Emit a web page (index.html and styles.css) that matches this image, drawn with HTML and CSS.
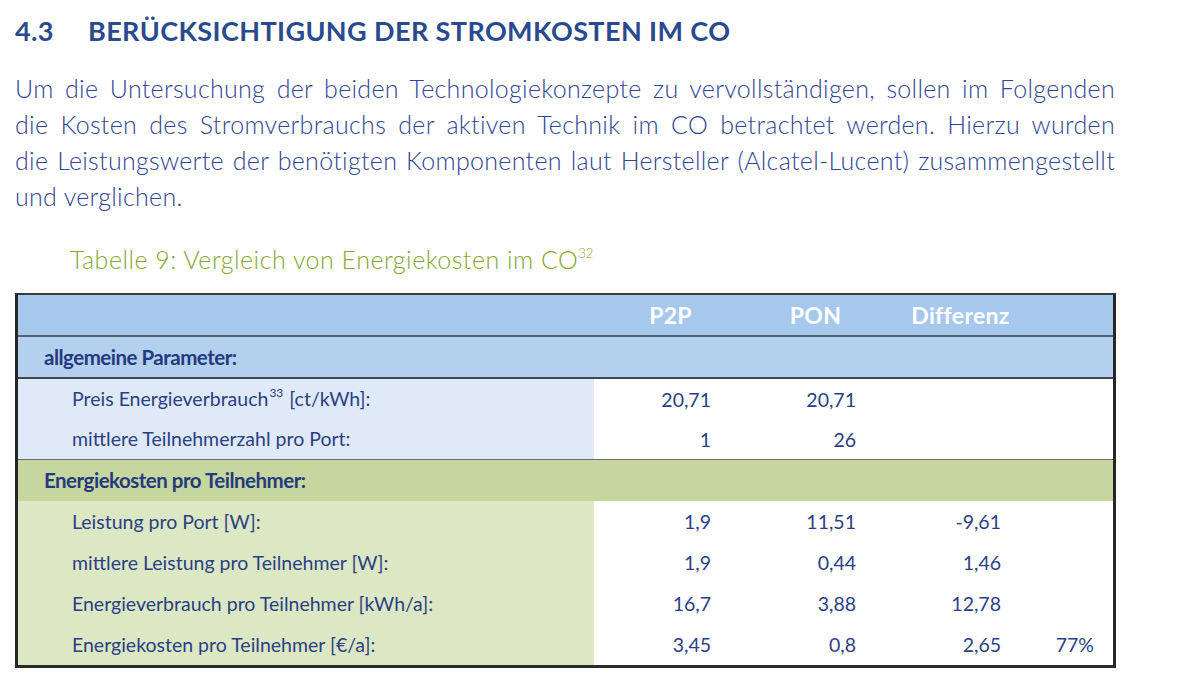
FILE: index.html
```html
<!DOCTYPE html>
<html lang="de">
<head>
<meta charset="utf-8">
<title>Berücksichtigung der Stromkosten im CO</title>
<link rel="stylesheet" href="styles.css">
</head>
<body>
<main class="page">
  <h1 class="heading"><span class="num">4.3</span><span class="title">BERÜCKSICHTIGUNG DER STROMKOSTEN IM CO</span></h1>
  <p class="lead"><span class="ln">Um die Untersuchung der beiden Technologiekonzepte zu vervollständigen, sollen im Folgenden</span> <span class="ln">die Kosten des Stromverbrauchs der aktiven Technik im CO betrachtet werden. Hierzu wurden</span> <span class="ln">die Leistungswerte der benötigten Komponenten laut Hersteller (Alcatel-Lucent) zusammengestellt</span> <span class="ln last">und verglichen.</span></p>
  <div class="caption">Tabelle 9: Vergleich von Energiekosten im CO<sup>32</sup></div>
  <div class="table">
    <div class="row head">
      <div class="c1"></div>
      <div class="c2 th">P2P</div>
      <div class="c3 th">PON</div>
      <div class="c4 th">Differenz</div>
      <div class="c5"></div>
    </div>
    <div class="row section blue">
      <div class="sec">allgemeine Parameter:</div>
    </div>
    <div class="row data blue">
      <div class="c1 label">Preis Energieverbrauch<sup>33</sup> [ct/kWh]:</div>
      <div class="c2 val">20,71</div>
      <div class="c3 val">20,71</div>
      <div class="c4 val"></div>
      <div class="c5 val"></div>
    </div>
    <div class="row data blue">
      <div class="c1 label">mittlere Teilnehmerzahl pro Port:</div>
      <div class="c2 val">1</div>
      <div class="c3 val">26</div>
      <div class="c4 val"></div>
      <div class="c5 val"></div>
    </div>
    <div class="row section green">
      <div class="sec">Energiekosten pro Teilnehmer:</div>
    </div>
    <div class="row data green">
      <div class="c1 label">Leistung pro Port [W]:</div>
      <div class="c2 val">1,9</div>
      <div class="c3 val">11,51</div>
      <div class="c4 val">-9,61</div>
      <div class="c5 val"></div>
    </div>
    <div class="row data green">
      <div class="c1 label">mittlere Leistung pro Teilnehmer [W]:</div>
      <div class="c2 val">1,9</div>
      <div class="c3 val">0,44</div>
      <div class="c4 val">1,46</div>
      <div class="c5 val"></div>
    </div>
    <div class="row data green">
      <div class="c1 label">Energieverbrauch pro Teilnehmer [kWh/a]:</div>
      <div class="c2 val">16,7</div>
      <div class="c3 val">3,88</div>
      <div class="c4 val">12,78</div>
      <div class="c5 val"></div>
    </div>
    <div class="row data green">
      <div class="c1 label">Energiekosten pro Teilnehmer [€/a]:</div>
      <div class="c2 val">3,45</div>
      <div class="c3 val">0,8</div>
      <div class="c4 val">2,65</div>
      <div class="c5 val">77%</div>
    </div>
  </div>
</main>
</body>
</html>
```
FILE: styles.css
```css
html, body {
  margin: 0;
  padding: 0;
  background: #ffffff;
}

.page {
  padding: 14px 0 0 15px;
  width: 1102px;
  font-family: "Lato", "DejaVu Sans", sans-serif;
  color: #34468c;
}

.heading {
  margin: 0;
  font-size: 27px;
  line-height: 34px;
  font-weight: 700;
  color: #2a4a8e;
  letter-spacing: 0.4px;
  display: flex;
}

.heading .num {
  width: 73px;
}

.lead {
  margin: 22px 0 0 0;
  width: 1100px;
  font-size: 25px;
  line-height: 36px;
  font-weight: 300;
  letter-spacing: 0.3px;
  color: #304594;
}

.lead .ln {
  display: block;
  white-space: nowrap;
  text-align: justify;
  text-align-last: justify;
}

.lead .ln.last {
  text-align: left;
  text-align-last: left;
}

.caption {
  margin: 30px 0 0 55px;
  font-size: 25px;
  line-height: 30px;
  font-weight: 300;
  letter-spacing: 0.5px;
  color: #86a833;
}

.caption sup {
  font-size: 13px;
  vertical-align: 11px;
  line-height: 0;
  letter-spacing: 0;
}

.table {
  margin-top: 19px;
  width: 1095px;
  border-left: 3px solid #262626;
  border-right: 3px solid #262626;
  border-top: 2px solid #3a3a3a;
  border-bottom: 3px solid #2a2a2a;
  box-shadow: 0 2px 0 #9a9a9a;
}

.row {
  display: grid;
  grid-template-columns: 576px 149px 145px 145px 80px;
  height: 40px;
  align-items: stretch;
}

.row > div {
  display: flex;
  align-items: center;
}

.head {
  background: #a6c8ec;
  border-bottom: 2px solid #55606c;
}

.th {
  justify-content: center;
  color: #ffffff;
  font-weight: 700;
  font-size: 23px;
  letter-spacing: 0.3px;
}

.head .c2 {
  padding-left: 4px;
}

.section {
  display: flex;
  align-items: center;
}

.section.blue {
  background: #b3d0ee;
  border-bottom: 2px solid #3f4650;
}

.section.green {
  background: #c5d69e;
  border-top: 1px solid #6a6a6a;
  border-bottom: 1px solid #c5d69e;
}

.sec {
  padding-left: 26px;
  font-weight: 700;
  font-size: 20.5px;
  letter-spacing: -0.5px;
  color: #253a7e;
}

.data {
  font-size: 19.5px;
  color: #2b3f85;
}

.data.blue .label {
  background: #dfe9f7;
}

.data.green .label {
  background: #dce7c4;
}

.row > .label {
  display: block;
  padding-left: 54px;
  line-height: 40px;
}

.data.green > .label {
  line-height: 41px;
}

.label sup {
  font-size: 12px;
  vertical-align: 9px;
  line-height: 0;
  margin: 0 1px 0 1px;
}

.data.green {
  height: 41px;
}

.val {
  justify-content: flex-end;
  padding-right: 32px;
}

.c5.val {
  padding-right: 19px;
}
```
